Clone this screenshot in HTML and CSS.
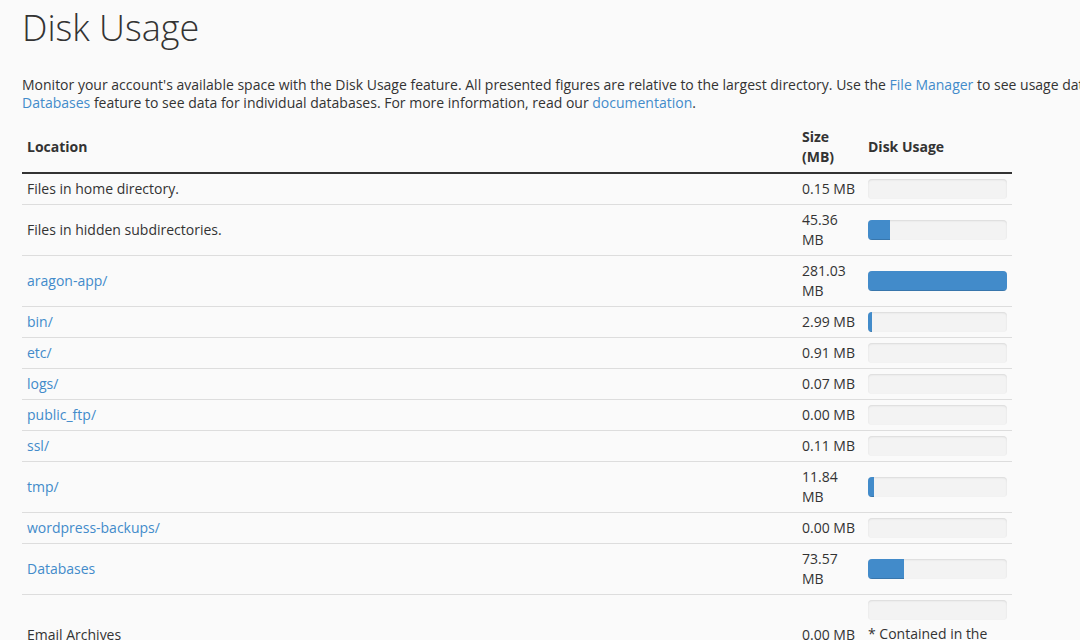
FILE: index.html
```html
<!DOCTYPE html>
<html lang="en">
<head>
<meta charset="utf-8">
<title>Disk Usage</title>
<link rel="stylesheet" href="styles.css">
</head>
<body>
<div class="page">
  <h1 class="title">Disk Usage</h1>
  <p class="intro">Monitor your account's available space with the Disk Usage feature. All presented figures are relative to the largest directory. Use the <a href="#">File Manager</a> to see usage data for individual files. Use the <a href="#">MySQL®<br>Databases</a> feature to see data for individual databases. For more information, read our <a href="#">documentation</a>.</p>
  <table class="usage">
    <thead>
      <tr>
        <th class="col-loc">Location</th>
        <th class="col-size">Size (MB)</th>
        <th class="col-bar">Disk Usage</th>
      </tr>
    </thead>
    <tbody>
      <tr>
        <td>Files in home directory.</td>
        <td>0.15 MB</td>
        <td><div class="progress"><div class="fill" style="width:0%"></div></div></td>
      </tr>
      <tr>
        <td>Files in hidden subdirectories.</td>
        <td>45.36 MB</td>
        <td><div class="progress"><div class="fill" style="width:16%"></div></div></td>
      </tr>
      <tr>
        <td><a href="#">aragon-app/</a></td>
        <td>281.03 MB</td>
        <td><div class="progress"><div class="fill" style="width:100%"></div></div></td>
      </tr>
      <tr>
        <td><a href="#">bin/</a></td>
        <td>2.99 MB</td>
        <td><div class="progress"><div class="fill" style="width:3%"></div></div></td>
      </tr>
      <tr>
        <td><a href="#">etc/</a></td>
        <td>0.91 MB</td>
        <td><div class="progress"><div class="fill" style="width:0%"></div></div></td>
      </tr>
      <tr>
        <td><a href="#">logs/</a></td>
        <td>0.07 MB</td>
        <td><div class="progress"><div class="fill" style="width:0%"></div></div></td>
      </tr>
      <tr>
        <td><a href="#">public_ftp/</a></td>
        <td>0.00 MB</td>
        <td><div class="progress"><div class="fill" style="width:0%"></div></div></td>
      </tr>
      <tr>
        <td><a href="#">ssl/</a></td>
        <td>0.11 MB</td>
        <td><div class="progress"><div class="fill" style="width:0%"></div></div></td>
      </tr>
      <tr>
        <td><a href="#">tmp/</a></td>
        <td>11.84 MB</td>
        <td><div class="progress"><div class="fill" style="width:4%"></div></div></td>
      </tr>
      <tr>
        <td><a href="#">wordpress-backups/</a></td>
        <td>0.00 MB</td>
        <td><div class="progress"><div class="fill" style="width:0%"></div></div></td>
      </tr>
      <tr>
        <td><a href="#">Databases</a></td>
        <td>73.57 MB</td>
        <td><div class="progress"><div class="fill" style="width:26%"></div></div></td>
      </tr>
      <tr>
        <td>Email Archives</td>
        <td>0.00 MB</td>
        <td><div class="progress spaced"><div class="fill" style="width:0%"></div></div><div class="note">* Contained in the home directory.</div></td>
      </tr>
    </tbody>
  </table>
</div>
</body>
</html>
```
FILE: styles.css
```css
html, body {
  margin: 0;
  padding: 0;
  background: #fafafa;
  overflow: hidden;
}

body {
  font-family: "Open Sans", "Liberation Sans", sans-serif;
  font-size: 14px;
  color: #333;
}

a {
  color: #428bca;
  text-decoration: none;
}

.page {
  width: 1400px;
  padding: 0 0 0 22px;
}

.title {
  margin: 0;
  padding-top: 7px;
  font-size: 36px;
  line-height: 41px;
  font-weight: 300;
  color: #333;
}

.intro {
  margin: 28px 0 0;
  line-height: 18px;
}

.usage {
  margin-top: 10px;
  width: 990px;
  border-collapse: collapse;
  table-layout: fixed;
}

.usage th,
.usage td {
  padding: 5px;
  line-height: 20px;
  text-align: left;
}

.usage th {
  font-weight: 700;
  vertical-align: middle;
  border-bottom: 2px solid #333;
}

.usage td {
  vertical-align: middle;
  border-top: 1px solid #ddd;
}

.col-loc { width: 765px; }
.col-size { width: 56px; }
.col-bar { width: 139px; }

.progress {
  height: 20px;
  background: #f3f3f3;
  border-radius: 4px;
  box-shadow: inset 0 1px 2px rgba(0, 0, 0, 0.1);
  overflow: hidden;
}

.progress.spaced {
  margin-bottom: 4px;
}

.note {
  margin-bottom: 6px;
}

.fill {
  height: 100%;
  background: #428bca;
  box-shadow: inset 0 -1px 0 rgba(0, 0, 0, 0.15);
}
```
